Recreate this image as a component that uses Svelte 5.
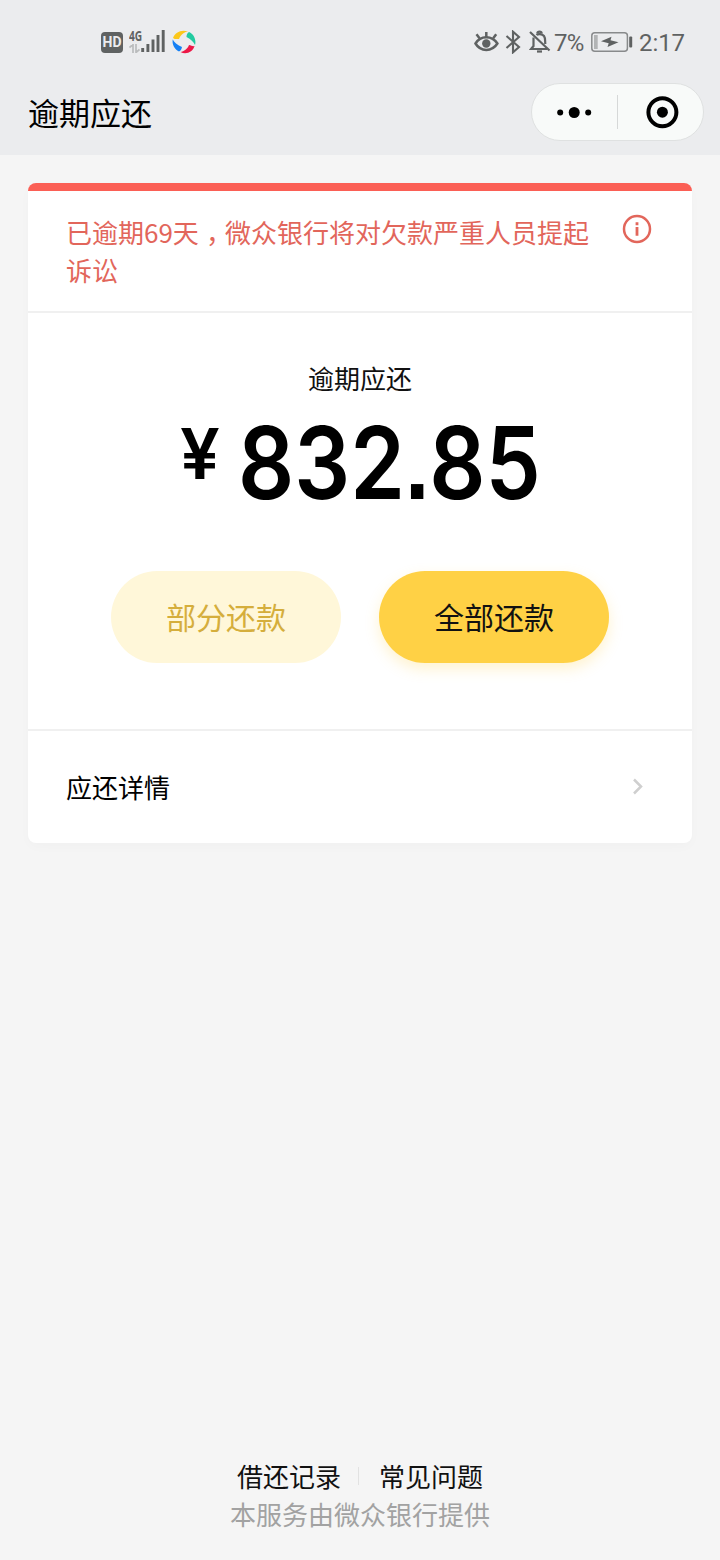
<script lang="ts">
  const title = '逾期应还'
  const overdueDays = 69
  const yuan = '832'
  const cents = '85'
  const battery = 7
  const time = '2:17'
  const links = ['借还记录', '常见问题']
</script>

<div class="page">
  <header>
    <div class="status-bar">
      <div class="status-left">
        <span class="hd">HD</span>
        <div class="network">
          <span class="net-type">4G</span>
          <svg class="arrows" width="11" height="9" viewBox="0 0 11 9">
            <path d="M4 0v9M4 .5L.5 3.5M7 9V0M7 8.5l3.5-3" fill="none" stroke="#babcbd" stroke-width="1.7" />
          </svg>
        </div>
        <svg class="signal" width="24" height="22" viewBox="0 0 24 22">
          <path d="M1.7 18v4M6.9 14v8M12 9.5V22M17 5v17M22.2 0v22" stroke="#5f6262" stroke-width="2.9" />
        </svg>
        <svg class="swirl" width="24" height="24" viewBox="0 0 24 24">
          <path d="M1 8C3 2 10-1 16 1.600C13 2 9 4 7 9C5 9 3 9.500 1 8Z" fill="#fbc71b" />
          <path d="M17 2C22 4 24.500 10 23 15C21.500 12 19 9 14.500 7C14.500 5 15 3 17 2Z" fill="#22cba0" />
          <path d="M22.500 16C21 22 14 25 8.500 22C12 21.500 15.500 19 17 15C19 15.500 21 16.500 22.500 16Z" fill="#ed1746" />
          <path d="M7 21.500C2 19 0 14 .700 9.500C2.500 12.500 5.500 15 10 17C9.500 19 9 21 7 21.500Z" fill="#1680f4" />
        </svg>
      </div>
      <div class="status-right">
        <svg width="25" height="22" viewBox="0 0 25 22" fill="none" stroke="#5f6262" stroke-width="2.500">
          <path d="M1.500 12.500C6.500 4.200 18 4.200 23.400 12.500C18 21 6.500 21 1.500 12.500Z" />
          <path d="M12.300 1v5M2.500 3.200l3 4M22.200 3.200l-3 4" />
          <circle cx="12.300" cy="12.500" r="4.200" fill="#5f6262" stroke="none" />
        </svg>
        <svg class="bluetooth" width="16" height="24" viewBox="0 0 16 24">
          <path d="M1.500 6L14 17L8 22.300V1.700L14 7L1.500 18" fill="none" stroke="#5f6262" stroke-width="2.100" />
        </svg>
        <svg class="bell" width="22" height="24" viewBox="0 0 22 24" fill="none" stroke="#5f6262" stroke-width="2.200">
          <path d="M4.500 7.500V16L2 19H18M7.500 5C9 3.600 13 3.600 15 6C16.500 8 16 11 16.300 14" />
          <path d="M8.300 3.500C8.500 1 12.500 1 12.700 3.500M1 2L20.500 20.500" />
          <path d="M8 21.500h5" />
        </svg>
        <span class="battery-text">{battery}%</span>
        <svg class="battery" width="42" height="20" viewBox="0 0 42 20">
          <rect x=".8" y=".8" width="35.600" height="18.400" rx="3" fill="none" stroke="#888a8b" stroke-width="1.500" />
          <rect x="3" y="3" width="3.700" height="14" fill="#b2b4b5" />
          <path d="M10 9.300L20.500 4.800L19.500 8.300L27.500 10.300L16.500 15L17.700 11.200Z" fill="#5f6262" />
          <rect x="38.200" y="4.500" width="3" height="11" rx="1" fill="#5f6262" />
        </svg>
        <span class="time">{time}</span>
      </div>
    </div>
    <div class="nav">
      <h1>{title}</h1>
      <div class="capsule">
        <svg class="more" width="85" height="56" viewBox="0 0 85 56">
          <circle cx="28.200" cy="28.500" r="3" />
          <circle cx="42.200" cy="28.500" r="5.500" />
          <circle cx="56.200" cy="28.500" r="3" />
        </svg>
        <span class="capsule-line"></span>
        <svg width="85" height="56" viewBox="0 0 85 56">
          <circle cx="44.400" cy="28.200" r="14" fill="none" stroke="#000" stroke-width="4" />
          <circle cx="44.400" cy="28.200" r="5.500" />
        </svg>
      </div>
    </div>
  </header>

  <main class="card">
    <div class="notice">
      <p>已逾期{overdueDays}天<span class="comma">，</span>微众银行将对欠款严重人员提起诉讼</p>
      <svg width="30" height="30" viewBox="0 0 30 30">
        <circle cx="15" cy="15" r="13" fill="none" stroke="#e2665b" stroke-width="2.500" />
        <path d="M15 13v8.800M15 8.300v3" stroke="#e2665b" stroke-width="2.800" />
      </svg>
    </div>

    <section class="balance">
      <div class="label">{title}</div>
      <div class="amount">
        <span class="yen">¥</span>
        <span class="number">{yuan}<span class="point">.</span>{cents}</span>
      </div>
      <div class="actions">
        <button class="partial">部分还款</button>
        <button class="full">全部还款</button>
      </div>
    </section>

    <div class="detail">
      <span>应还详情</span>
      <svg width="12" height="18" viewBox="0 0 12 18">
        <path d="M2 2.500l7 7L2 16.500" fill="none" stroke="#cfcfcf" stroke-width="2.500" />
      </svg>
    </div>
  </main>

  <footer>
    <nav>
      <span>{links[0]}</span>
      <i></i>
      <span>{links[1]}</span>
    </nav>
    <p>本服务由微众银行提供</p>
  </footer>
</div>

<style>
  :global(body) {
    margin: 0;
    background: #f5f5f5;
  }
  .page {
    display: flex;
    flex-direction: column;
    width: 720px;
    height: 1560px;
    background: #f5f5f5;
    color: #111;
    font-family: 'Noto Sans CJK SC', sans-serif;
    font-size: 26px;
    overflow: hidden;
  }
  svg { display: block; flex-shrink: 0; }
  p, h1 { margin: 0; font-weight: 400; }

  header {
    height: 155px;
    background: #ebecee;
  }
  .status-bar {
    display: flex;
    justify-content: space-between;
    height: 83px;
    box-sizing: border-box;
    padding: 28px 35px 0 101px;
    color: #5f6262;
    font-family: Roboto, sans-serif;
  }
  .status-left, .status-right {
    display: flex;
    height: 28px;
    align-items: center;
  }
  .hd {
    width: 22px;
    height: 21px;
    border-radius: 4px;
    background: #5f6262;
    color: #ebecee;
    font-size: 14px;
    font-weight: 700;
    line-height: 21px;
    text-align: center;
  }
  .network {
    display: flex;
    flex-direction: column;
    gap: 2px;
    width: 12px;
    margin: 0 0 3px 6px;
  }
  .net-type {
    font-family: 'Open Sans', sans-serif;
    font-size: 15px;
    font-weight: 700;
    line-height: 13px;
    transform: scaleX(0.68);
    transform-origin: left;
  }
  .signal { margin-bottom: 2px; }
  .swirl { margin-left: 7px; }
  .bluetooth { margin-left: 6px; }
  .bell { margin-left: 8px; }
  .battery-text {
    width: 30px;
    margin-left: 3px;
    padding-top: 2px;
    font-size: 24px;
    letter-spacing: -0.8px;
    line-height: 28px;
    white-space: nowrap;
  }
  .battery { margin-left: 7px; }
  .time { margin-left: 6px; padding-top: 2px; font-size: 24px; letter-spacing: -0.1px; line-height: 28px; }

  .nav {
    display: flex;
    justify-content: space-between;
    padding: 0 16px 0 28px;
  }
  h1 {
    color: #000;
    font-size: 31px;
    line-height: 57px;
  }
  .capsule {
    display: flex;
    align-items: center;
    width: 173px;
    height: 58px;
    box-sizing: border-box;
    border: 1px solid #dfe1e1;
    border-radius: 29px;
    background: #f8faf9;
  }
  .capsule-line { flex: none; width: 1px; height: 34px; background: #d6d8d8; }

  .card {
    height: 660px;
    box-sizing: border-box;
    margin: 28px 28px 0;
    border-radius: 8px;
    border-top: 8px solid #fb5f55;
    background: #fff;
    box-shadow: 0 4px 12px rgba(0, 0, 0, 0.02);
  }
  .notice {
    display: flex;
    justify-content: space-between;
    height: 122px;
    box-sizing: border-box;
    padding: 22px 40px 0 38px;
    border-bottom: 2px solid #f0f0f0;
    color: #e2665b;
  }
  .notice p { width: 528px; line-height: 38px; }
  .notice svg { margin-top: 1px; }
  .comma { display: inline-block; width: 26px; text-indent: 7px; white-space: nowrap; }

  .balance {
    height: 418px;
    box-sizing: border-box;
    padding-top: 46px;
    border-bottom: 2px solid #f0f0f0;
  }
  .label { line-height: 38px; text-align: center; }
  .amount {
    display: flex;
    justify-content: center;
    height: 98px;
    margin-top: 16px;
    color: #000;
    font-family: Inter, sans-serif;
    font-weight: 600;
  }
  .yen {
    width: 38px;
    margin-right: 20px;
    font-size: 70px;
    line-height: 82px;
    transform: scaleX(1.01);
    transform-origin: left;
  }
  .number {
    width: 302px;
    font-size: 101px;
    line-height: 99px;
    transform: scaleX(0.87);
    transform-origin: left;
  }
  /* square decimal point */
  .point { font-family: 'Liberation Sans', sans-serif; line-height: 0; }
  .actions {
    display: flex;
    justify-content: center;
    gap: 38px;
    margin-top: 60px;
  }
  button {
    width: 230px;
    height: 92px;
    padding: 0 0 3px;
    border: 0;
    border-radius: 46px;
    font-family: inherit;
    font-size: 30px;
  }
  .partial { background: #fff7d9; color: #d5ae3c; }
  .full { background: #ffd145; color: #111; box-shadow: 0 6px 14px rgba(255, 209, 69, 0.25); }

  .detail {
    display: flex;
    align-items: center;
    justify-content: space-between;
    height: 110px;
    padding: 0 48px 0 38px;
    color: #000;
  }

  footer {
    margin-top: auto;
    padding-bottom: 27px;
    line-height: 38px;
    text-align: center;
  }
  nav {
    display: flex;
    align-items: center;
    justify-content: center;
  }
  i { width: 1px; height: 18px; margin: 0 20px 0 17px; background: #e2e2e2; }
  footer p { color: #a2a2a2; }
</style>
